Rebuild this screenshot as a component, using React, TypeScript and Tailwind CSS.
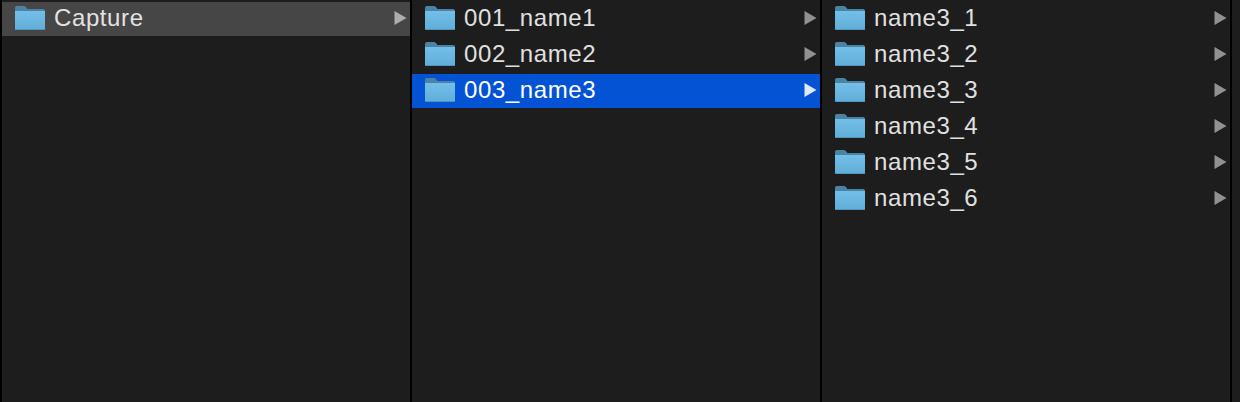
import { useId } from "react";

type Row = {
  label: string;
  state?: "active" | "inactive";
};

const columns: Row[][] = [
  [{ label: "Capture", state: "inactive" }],
  [
    { label: "001_name1" },
    { label: "002_name2" },
    { label: "003_name3", state: "active" },
  ],
  [
    { label: "name3_1" },
    { label: "name3_2" },
    { label: "name3_3" },
    { label: "name3_4" },
    { label: "name3_5" },
    { label: "name3_6" },
  ],
];

function FolderIcon() {
  const id = useId();

  return (
    <svg width="32" height="26" viewBox="0 0 32 26" className="shrink-0">
      <defs>
        <linearGradient id={id} x1="0" y1="0" x2="0" y2="1">
          <stop offset="0" stopColor="#74bfe8" />
          <stop offset="1" stopColor="#5fadd9" />
        </linearGradient>
      </defs>
      <path
        d="M1 8V3C1 1.800 1.800 1 3 1H9.500C10.800 1 11.500 1.500 12.300 2.500L13.500 4H29C30.300 4 31 4.800 31 6V8Z"
        fill="#4a83a3"
      />
      <path
        d="M1 6H31V23.500C31 24.500 30.300 25 29.500 25H2.500C1.700 25 1 24.500 1 23.500Z"
        fill={`url(#${id})`}
      />
      <rect x="1" y="24" width="30" height="1" rx="0.500" fill="#4f95bf" />
    </svg>
  );
}

function Arrow({ state }: { state: Row["state"] }) {
  const fill =
    state === "active"
      ? "#dfe8f8"
      : state === "inactive"
        ? "#adadad"
        : "#919191";

  return (
    <svg width="13" height="14" viewBox="0 0 13 14" className="shrink-0">
      <path d="M0.500 0L12.500 7L0.500 14Z" fill={fill} />
    </svg>
  );
}

function FinderRow({ label, state }: Row) {
  const rowClass =
    state === "active"
      ? "bg-[#0453d4] text-white"
      : state === "inactive"
        ? "bg-[#464646] text-[#e2e2e2]"
        : "text-[#e0e0e0]";

  return (
    <div className={`mb-[2px] flex h-[34px] items-center pb-[2px] pl-[12px] pr-[3px] ${rowClass}`}>
      <FolderIcon />
      <span className="ml-[8px] flex-1 text-[24px] leading-none tracking-[0.6px]">
        {label}
      </span>
      <Arrow state={state} />
    </div>
  );
}

export default function App() {
  return (
    <div className="flex h-[402px] w-[1240px] overflow-hidden bg-black pl-[2px] font-['Liberation_Sans',Arial,sans-serif]">
      {columns.map((rows, idx) => (
        <div
          key={idx}
          className="mr-[2px] h-full w-[408px] shrink-0 bg-[#1d1d1d] pt-[2px]"
        >
          {rows.map((row) => (
            <FinderRow key={row.label} {...row} />
          ))}
        </div>
      ))}
      <div className="flex-1 bg-[#1d1d1d]" />
    </div>
  );
}
